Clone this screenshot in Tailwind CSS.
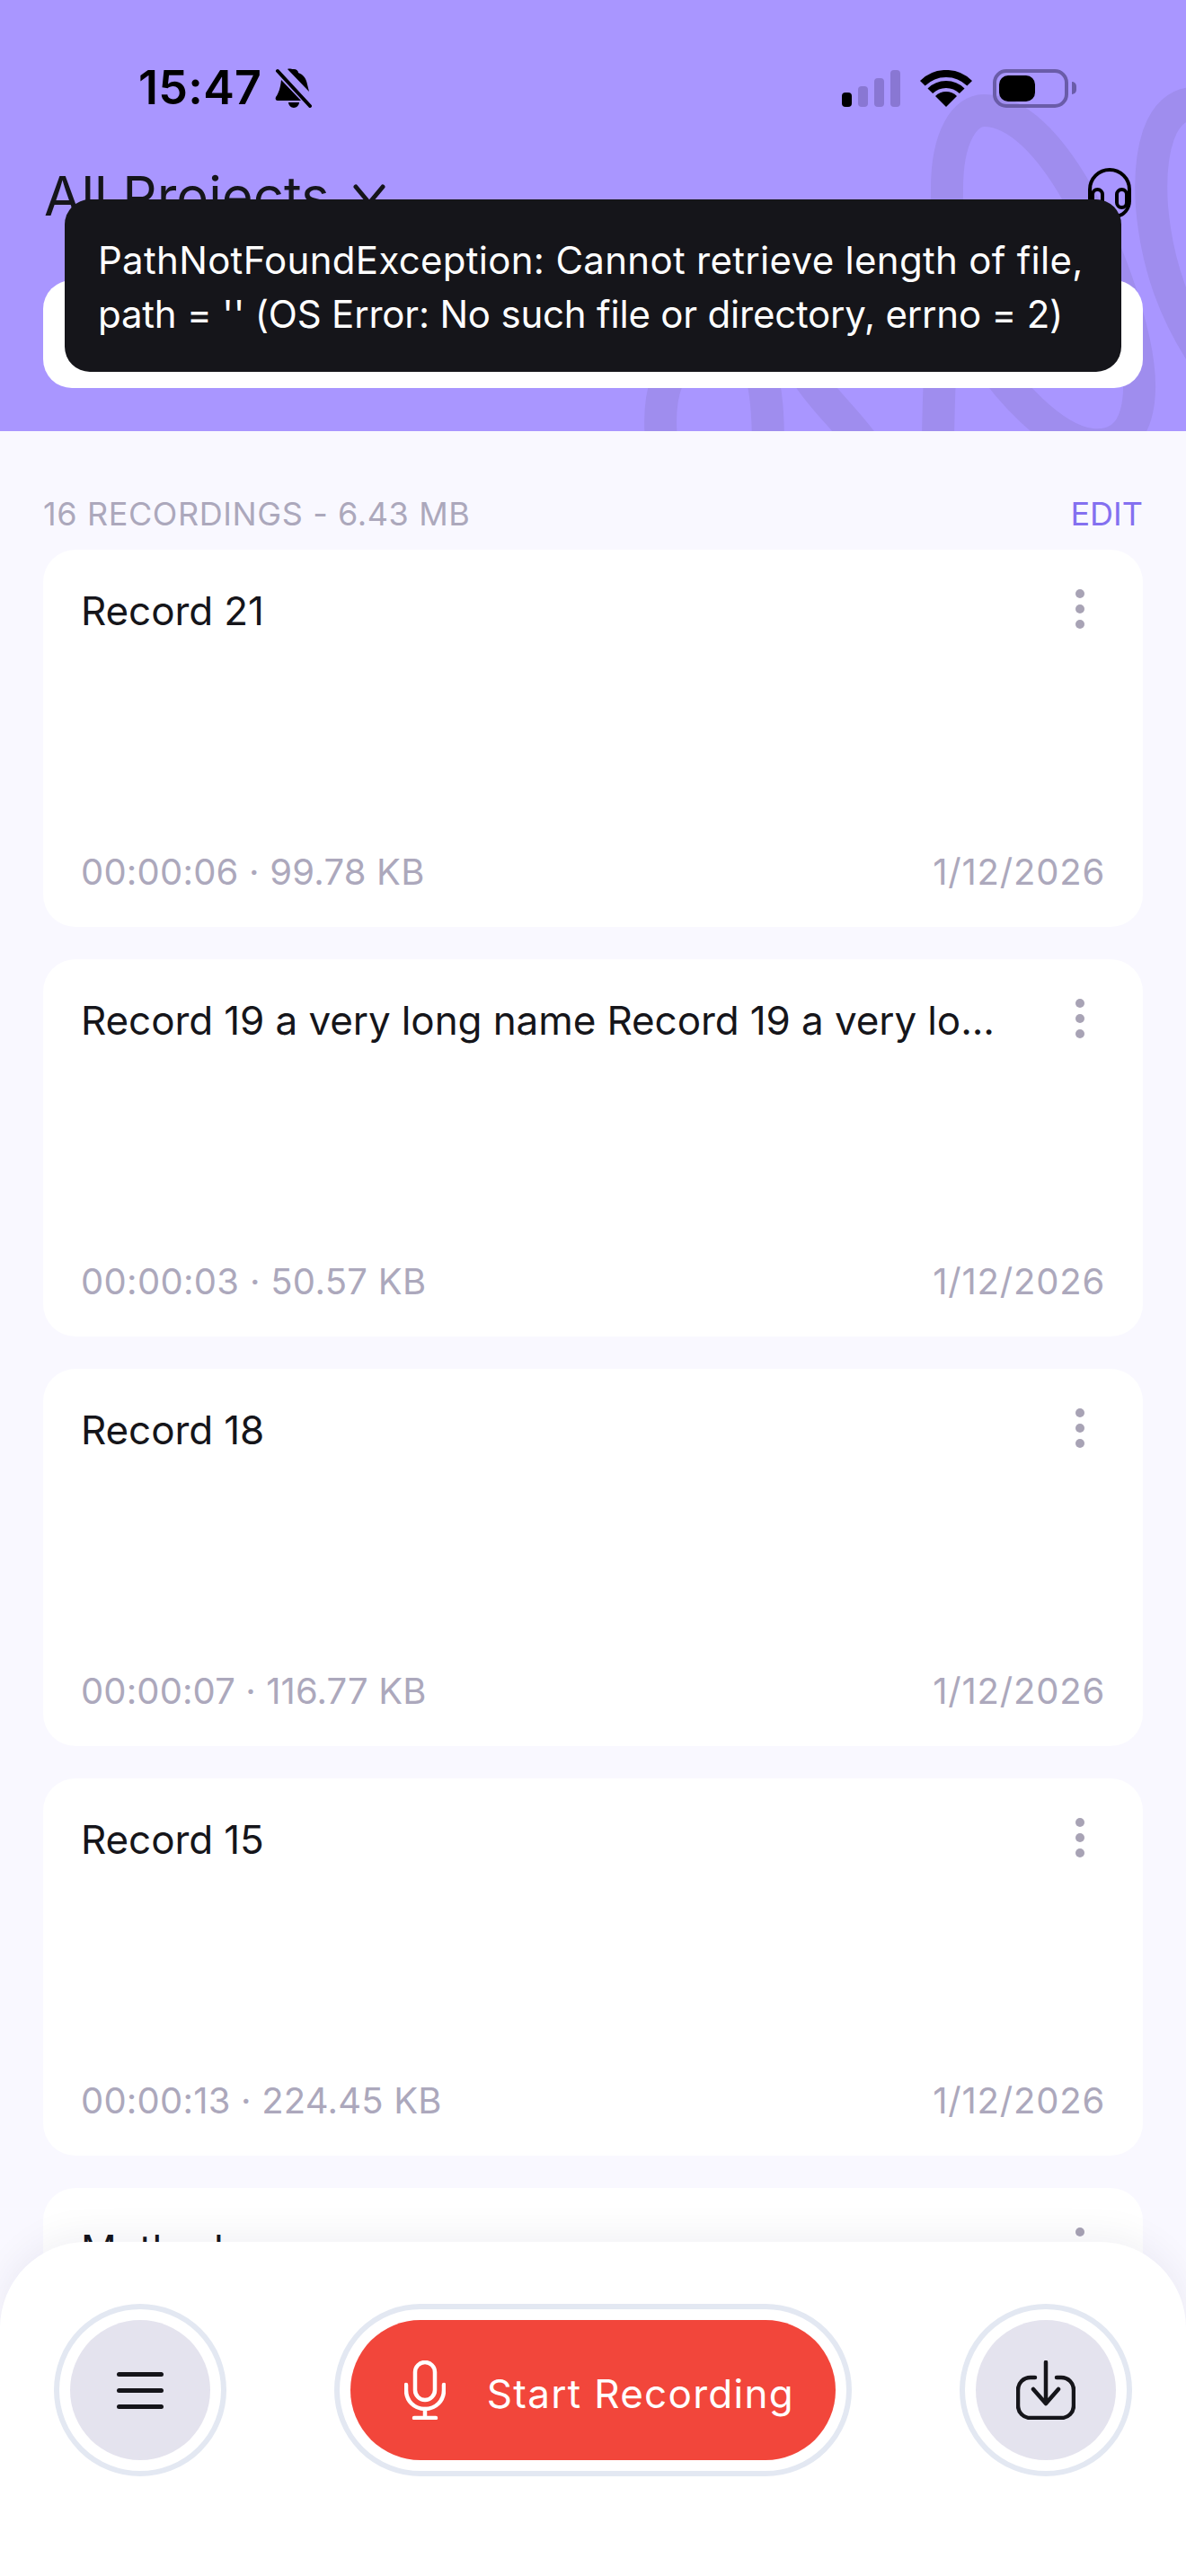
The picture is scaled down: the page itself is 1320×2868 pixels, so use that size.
<!DOCTYPE html>
<html lang="en">
  <head>
    <meta charset="UTF-8" />
    <meta name="viewport" content="width=device-width, initial-scale=1" />
    <title>Recordings</title>
    <script src="https://cdn.jsdelivr.net/npm/@tailwindcss/browser@4"></script>
  </head>
  <body class="bg-[#f9f8ff] font-['Inter',sans-serif] text-[#15151a]">
    <div class="relative h-[2868px] w-[1320px] overflow-hidden">
      <!-- Header -->
      <header class="relative h-[480px] overflow-hidden bg-[#a996ff]">
        <svg class="absolute inset-0" width="1320" height="480" fill="none" stroke="#9f8dee" stroke-width="36">
          <path d="M1044 500C1044 400 1054 300 1054 210C1054 150 1075 123 1095 123C1170 123 1240 280 1262 380C1275 440 1270 500 1215 495C1170 490 1120 430 1100 400" />
          <path d="M737 500C730 440 740 400 790 380C850 370 855 430 855 500" />
          <path d="M900 420C920 450 945 470 965 500" />
          <path d="M1330 115C1290 115 1278 170 1282 230C1288 300 1310 350 1335 390" />
        </svg>

        <!-- Status bar -->
        <div class="relative flex h-[48px] translate-y-[74px] items-center justify-between pl-[154px] pr-[122px]">
          <div class="flex items-center gap-[15px]">
            <span class="text-[52px] font-semibold leading-none tracking-[0.3px] text-black">15:47</span>
            <svg width="42" height="44" viewBox="0 0 42 44" fill="black">
              <path d="M21 1c3 0 5 2 5 4 6 2 9 7 10 13l2 8-24-25c2-1 4 0 7 0ZM7 13l22 23H3c-2 0-3-2-2-4 3-4 5-10 6-19ZM15 38h12c0 3-3 6-6 6s-6-3-6-6Z" />
              <path d="M3 3l36 39" stroke="black" stroke-width="4" stroke-linecap="round" />
            </svg>
          </div>
          <div class="flex items-center">
            <div class="flex h-[41px] items-end gap-[7px]">
              <div class="h-[16px] w-[11px] rounded-[4px] bg-black"></div>
              <div class="h-[23px] w-[11px] rounded-[4px] bg-[#8977d3]"></div>
              <div class="h-[32px] w-[11px] rounded-[4px] bg-[#8977d3]"></div>
              <div class="h-[41px] w-[11px] rounded-[4px] bg-[#8977d3]"></div>
            </div>
            <svg class="ml-[22px]" width="58" height="41" viewBox="0 0 58 41" fill="none" stroke="black" stroke-width="8">
              <path d="M2.8 14.8A37 37 0 0 1 55.2 14.8" />
              <path d="M11.3 23.3A25 25 0 0 1 46.7 23.3" />
              <path d="M29 41L17 29A17 17 0 0 1 41 29Z" fill="black" stroke="none" />
            </svg>
            <div class="ml-[23px] flex items-center">
              <div class="h-[43px] w-[84px] rounded-[15px] border-[4px] border-[#6a5ca8] p-[3px]">
                <div class="h-full w-[40px] rounded-[10px] bg-black"></div>
              </div>
              <div class="ml-[4px] h-[14px] w-[5px] rounded-r-full bg-[#6a5ca8]"></div>
            </div>
          </div>
        </div>

        <!-- Title row -->
        <div class="relative mt-[138px] flex h-[64px] items-center justify-between pl-[49px] pr-[60px]">
          <div class="flex items-center gap-[26px]">
            <span class="text-[60px] leading-none">All Projects</span>
            <svg width="36" height="26" viewBox="0 0 36 26" fill="none" stroke="#15151a" stroke-width="5" stroke-linecap="round" stroke-linejoin="round">
              <path d="M3 3l15 18L33 3" />
            </svg>
          </div>
          <svg class="-mt-[6px]" width="50" height="56" viewBox="0 0 50 56" fill="none" stroke="black" stroke-width="4" stroke-linecap="round">
            <path d="M3 36V24a22 22 0 0 1 44 0v12" />
            <rect x="6" y="24" width="11" height="20" rx="5.5" />
            <rect x="33" y="24" width="11" height="20" rx="5.5" />
            <path d="M47 36c0 10-6 16-14 18" />
          </svg>
        </div>

        <!-- Search -->
        <div class="relative mx-[48px] mt-[62px] h-[120px] rounded-[32px] bg-white"></div>
      </header>

      <!-- Recordings -->
      <main class="px-[48px] pt-[76px]">
        <div class="mb-[24px] flex h-[32px] items-center justify-between text-[36px] leading-none">
          <span class="tracking-[0.6px] text-[#aca8bc]">16 RECORDINGS - 6.43 MB</span>
          <span class="text-[#8470f0]">EDIT</span>
        </div>
        <div class="flex flex-col gap-[36px]">
          <article class="flex h-[420px] flex-col justify-between rounded-[36px] bg-white pb-[36px] pl-[42px] pr-[42px] pt-[40px]">
            <div class="flex items-start justify-between">
              <h2 class="whitespace-nowrap text-[44px] leading-[56px] tracking-[-0.1px]">Record 21</h2>
              <div class="mr-[23px] mt-[4px] flex flex-col gap-[7px]">
                <span class="size-[10px] rounded-full bg-[#a8a3b5]"></span>
                <span class="size-[10px] rounded-full bg-[#a8a3b5]"></span>
                <span class="size-[10px] rounded-full bg-[#a8a3b5]"></span>
              </div>
            </div>
            <div class="flex justify-between text-[40px] leading-[50px] text-[#aca8bc]">
              <span class="tracking-[0.2px]">00:00:06 · 99.78 KB</span>
              <span class="tracking-[0.8px]">1/12/2026</span>
            </div>
          </article>
          <article class="flex h-[420px] flex-col justify-between rounded-[36px] bg-white pb-[36px] pl-[42px] pr-[42px] pt-[40px]">
            <div class="flex items-start justify-between">
              <h2 class="whitespace-nowrap text-[44px] leading-[56px] tracking-[-0.1px]">Record 19 a very long name Record 19 a very lo...</h2>
              <div class="mr-[23px] mt-[4px] flex flex-col gap-[7px]">
                <span class="size-[10px] rounded-full bg-[#a8a3b5]"></span>
                <span class="size-[10px] rounded-full bg-[#a8a3b5]"></span>
                <span class="size-[10px] rounded-full bg-[#a8a3b5]"></span>
              </div>
            </div>
            <div class="flex justify-between text-[40px] leading-[50px] text-[#aca8bc]">
              <span class="tracking-[0.3px]">00:00:03 · 50.57 KB</span>
              <span class="tracking-[0.8px]">1/12/2026</span>
            </div>
          </article>
          <article class="flex h-[420px] flex-col justify-between rounded-[36px] bg-white pb-[36px] pl-[42px] pr-[42px] pt-[40px]">
            <div class="flex items-start justify-between">
              <h2 class="whitespace-nowrap text-[44px] leading-[56px] tracking-[-0.1px]">Record 18</h2>
              <div class="mr-[23px] mt-[4px] flex flex-col gap-[7px]">
                <span class="size-[10px] rounded-full bg-[#a8a3b5]"></span>
                <span class="size-[10px] rounded-full bg-[#a8a3b5]"></span>
                <span class="size-[10px] rounded-full bg-[#a8a3b5]"></span>
              </div>
            </div>
            <div class="flex justify-between text-[40px] leading-[50px] text-[#aca8bc]">
              <span class="tracking-[0.1px]">00:00:07 · 116.77 KB</span>
              <span class="tracking-[0.8px]">1/12/2026</span>
            </div>
          </article>
          <article class="flex h-[420px] flex-col justify-between rounded-[36px] bg-white pb-[36px] pl-[42px] pr-[42px] pt-[40px]">
            <div class="flex items-start justify-between">
              <h2 class="whitespace-nowrap text-[44px] leading-[56px] tracking-[-0.1px]">Record 15</h2>
              <div class="mr-[23px] mt-[4px] flex flex-col gap-[7px]">
                <span class="size-[10px] rounded-full bg-[#a8a3b5]"></span>
                <span class="size-[10px] rounded-full bg-[#a8a3b5]"></span>
                <span class="size-[10px] rounded-full bg-[#a8a3b5]"></span>
              </div>
            </div>
            <div class="flex justify-between text-[40px] leading-[50px] text-[#aca8bc]">
              <span class="tracking-[0.2px]">00:00:13 · 224.45 KB</span>
              <span class="tracking-[0.8px]">1/12/2026</span>
            </div>
          </article>
          <article class="flex h-[420px] flex-col justify-between rounded-[36px] bg-white pb-[36px] pl-[42px] pr-[42px] pt-[40px]">
            <div class="flex items-start justify-between">
              <h2 class="whitespace-nowrap text-[44px] leading-[56px] tracking-[-0.1px]">Methods</h2>
              <div class="mr-[23px] mt-[4px] flex flex-col gap-[7px]">
                <span class="size-[10px] rounded-full bg-[#a8a3b5]"></span>
                <span class="size-[10px] rounded-full bg-[#a8a3b5]"></span>
                <span class="size-[10px] rounded-full bg-[#a8a3b5]"></span>
              </div>
            </div>
          </article>
        </div>
      </main>

      <!-- Error toast -->
      <div class="absolute left-[72px] top-[222px] h-[192px] w-[1176px] rounded-[28px] bg-[#15151a] px-[37px] pt-[38px] text-[42px] leading-[60px] text-white">
        <p class="whitespace-nowrap tracking-[0.3px]">PathNotFoundException: Cannot retrieve length of file,</p>
        <p class="whitespace-nowrap tracking-[-0.2px]">path = '' (OS Error: No such file or directory, errno = 2)</p>
      </div>

      <!-- Bottom bar -->
      <div class="absolute inset-x-0 bottom-0 h-[372px] rounded-t-[96px] bg-white shadow-[0_-8px_40px_rgba(20,20,60,0.06)]">
        <div class="flex justify-between px-[60px] pt-[69px]">
          <div class="size-[192px] rounded-full border-[6px] border-[#e3e8f2] p-[12px]">
            <div class="flex size-[156px] flex-col items-center justify-center gap-[13px] rounded-full bg-[#e4e3ee]">
              <span class="h-[5px] w-[52px] rounded-full bg-[#15151a]"></span>
              <span class="h-[5px] w-[52px] rounded-full bg-[#15151a]"></span>
              <span class="h-[5px] w-[52px] rounded-full bg-[#15151a]"></span>
            </div>
          </div>
          <div class="h-[192px] w-[576px] rounded-full border-[6px] border-[#e3e8f2] p-[12px]">
            <div class="flex h-[156px] items-center justify-center gap-[46px] rounded-full bg-[#f2463b] pl-[14px]">
              <svg width="46" height="66" viewBox="0 0 46 66" fill="none" stroke="white" stroke-width="4.5" stroke-linecap="round">
                <rect x="12" y="2" width="22" height="42" rx="11" />
                <path d="M2 27v6c0 12 9 21 21 21s21-9 21-21v-6" />
                <path d="M23 54v10M11 64h24" />
              </svg>
              <span class="pt-[8px] text-[44px] leading-none tracking-[1.3px] text-white">Start Recording</span>
            </div>
          </div>
          <div class="size-[192px] rounded-full border-[6px] border-[#e3e8f2] p-[12px]">
            <div class="flex size-[156px] items-center justify-center rounded-full bg-[#e4e3ee]">
              <svg width="66" height="66" viewBox="0 0 66 66" fill="none" stroke="#15151a" stroke-width="4.5" stroke-linecap="round" stroke-linejoin="round">
                <path d="M33 2v42M19 32l14 16 14-16" />
                <path d="M21 19h-5C8 19 2 25 2 33v17c0 8 6 14 14 14h34c8 0 14-6 14-14V33c0-8-6-14-14-14h-5" />
              </svg>
            </div>
          </div>
        </div>
      </div>
    </div>
  </body>
</html>
